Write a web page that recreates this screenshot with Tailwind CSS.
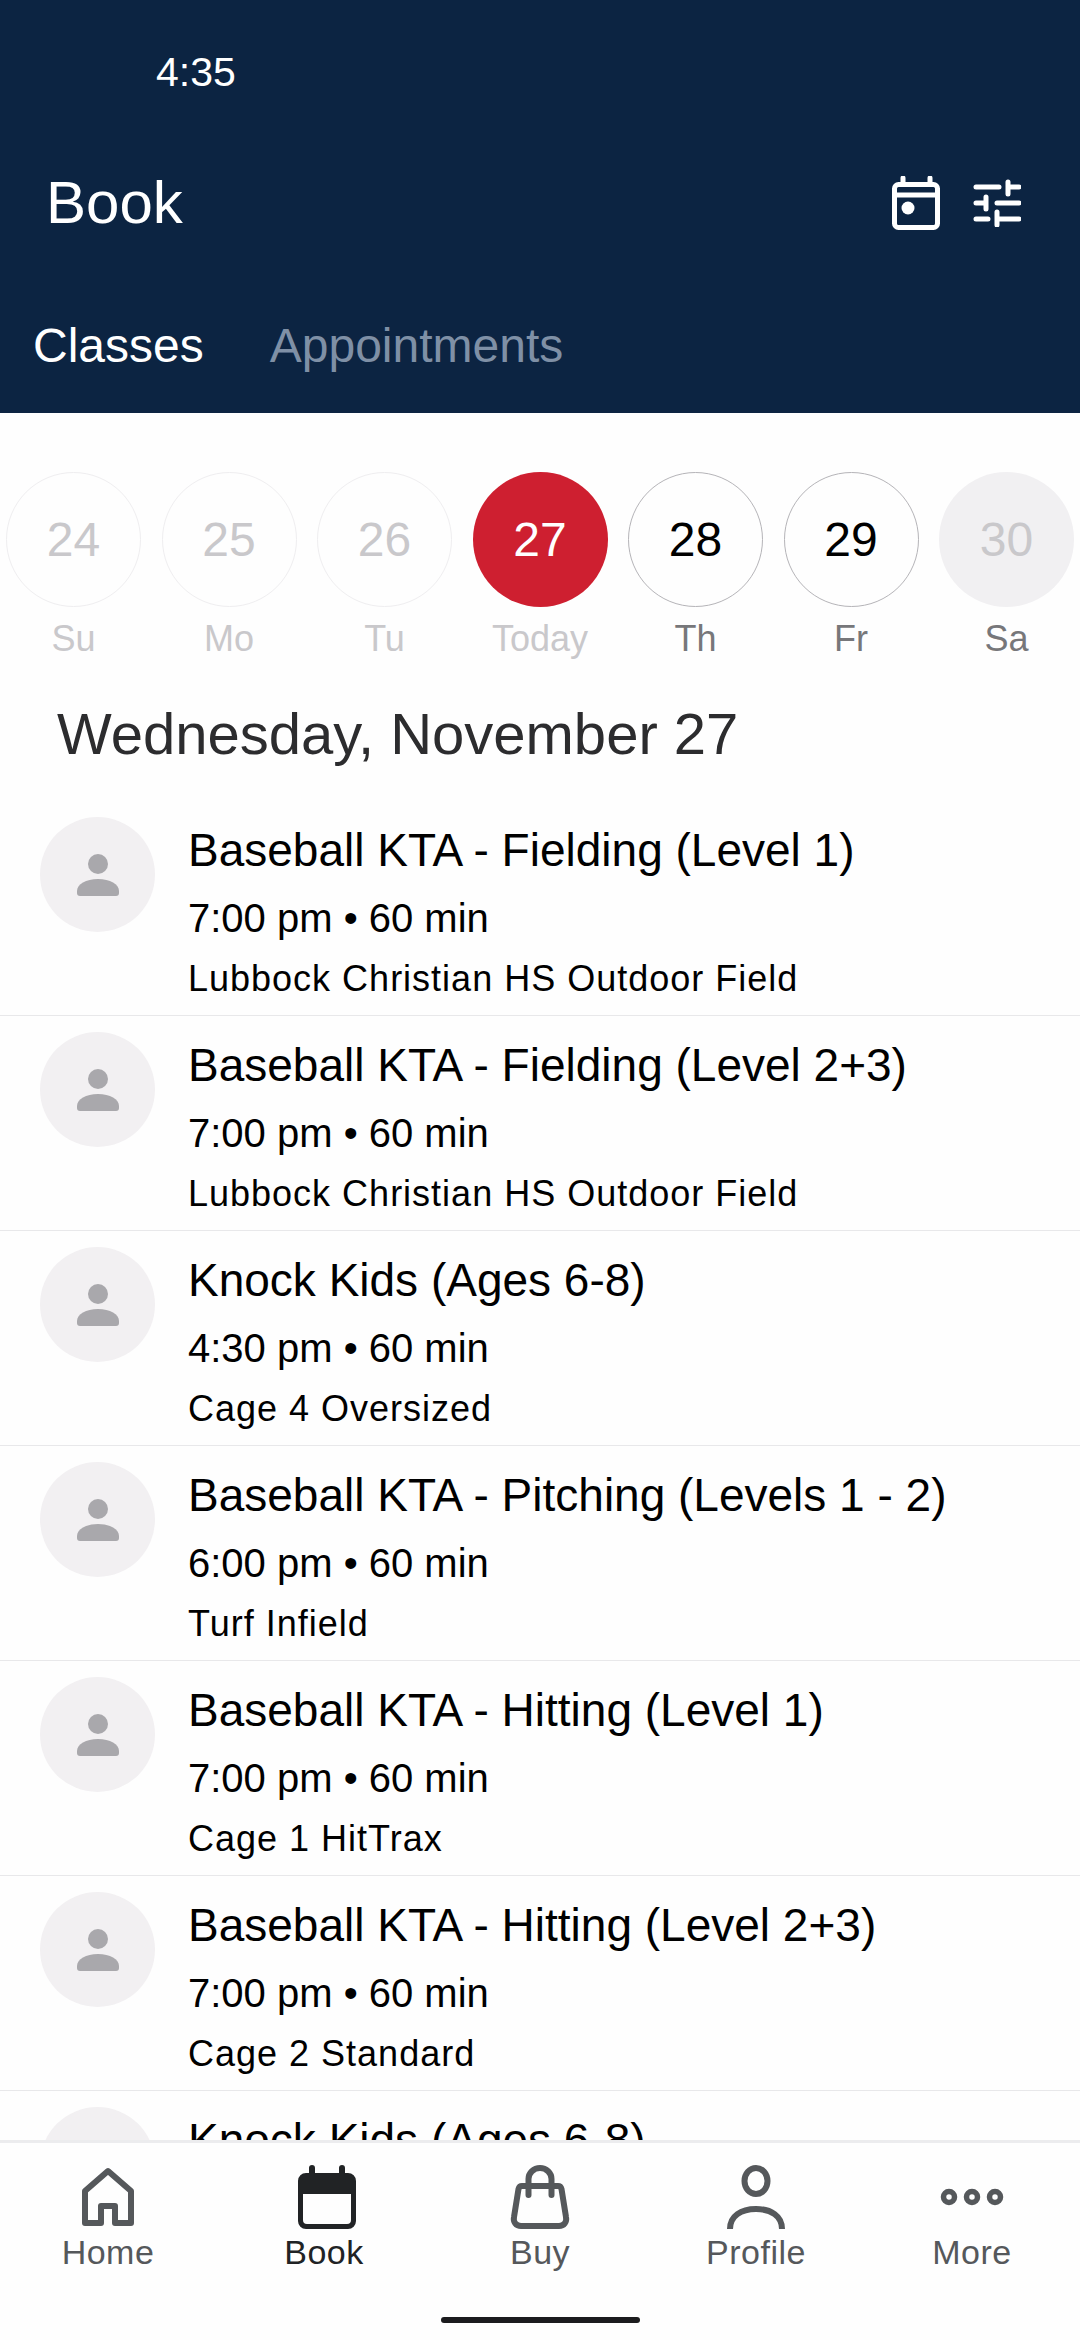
<!doctype html>
<html lang="en">
<head>
<meta charset="UTF-8" />
<meta name="viewport" content="width=device-width, initial-scale=1.0" />
<title>Book</title>
<script src="https://cdn.jsdelivr.net/npm/@tailwindcss/browser@4"></script>
</head>
<body class="font-['Liberation_Sans',sans-serif]">
<div class="w-[1080px] h-[2340px] flex flex-col overflow-hidden bg-[#fefefe]">

  <!-- header -->
  <header class="h-[413px] shrink-0 bg-[#0c2442] text-white">
    <div class="h-[144px] flex items-center pl-[156px] pt-[2px] text-[41px]">4:35</div>
    <div class="h-[118px] flex items-center justify-between pl-[46px] pr-[59px]">
      <h1 class="text-[60px]">Book</h1>
      <div class="flex items-center gap-[33px]">
        <svg width="48" height="54" viewBox="0 0 48 54" fill="none" stroke="white" stroke-width="5" stroke-linecap="round">
          <rect x="2.5" y="8.5" width="43" height="43" rx="4" />
          <path d="M11 2V8M38 2V8M3 19H45" />
          <circle cx="16" cy="32" r="6.5" fill="white" stroke="none" />
        </svg>
        <svg width="48" height="48" viewBox="0 0 48 48" fill="none" stroke="white" stroke-width="5" stroke-linecap="round">
          <path d="M3 8H26M35 3V15M35 8H46M3 24H13M13 18V30M24 24H46M3 40H15M24 33V46M24 40H46" />
        </svg>
      </div>
    </div>
    <div class="h-[151px] flex items-center gap-[66px] pl-[33px] pt-[16px] text-[48px]">
      <span>Classes</span>
      <span class="text-[#7f90a6]">Appointments</span>
    </div>
  </header>

  <!-- date strip -->
  <div class="flex gap-[20.5px] pl-[6px] pt-[59px] shrink-0">
    <div class="w-[135px] flex flex-col items-center">
      <div class="size-[135px] rounded-full border border-[#efeef0] flex items-center justify-center text-[48px] text-[#c9c8cb]">24</div>
      <span class="mt-[10px] text-[36px] leading-[44px] text-[#c9c8cb]">Su</span>
    </div>
    <div class="w-[135px] flex flex-col items-center">
      <div class="size-[135px] rounded-full border border-[#efeef0] flex items-center justify-center text-[48px] text-[#c9c8cb]">25</div>
      <span class="mt-[10px] text-[36px] leading-[44px] text-[#c9c8cb]">Mo</span>
    </div>
    <div class="w-[135px] flex flex-col items-center">
      <div class="size-[135px] rounded-full border border-[#efeef0] flex items-center justify-center text-[48px] text-[#c9c8cb]">26</div>
      <span class="mt-[10px] text-[36px] leading-[44px] text-[#c9c8cb]">Tu</span>
    </div>
    <div class="w-[135px] flex flex-col items-center">
      <div class="size-[135px] rounded-full bg-[#ce1f30] flex items-center justify-center text-[48px] text-white">27</div>
      <span class="mt-[10px] text-[36px] leading-[44px] text-[#c9c8cb]">Today</span>
    </div>
    <div class="w-[135px] flex flex-col items-center">
      <div class="size-[135px] rounded-full border border-[#b5b4b8] flex items-center justify-center text-[48px] text-black">28</div>
      <span class="mt-[10px] text-[36px] leading-[44px] text-[#77777a]">Th</span>
    </div>
    <div class="w-[135px] flex flex-col items-center">
      <div class="size-[135px] rounded-full border border-[#b5b4b8] flex items-center justify-center text-[48px] text-black">29</div>
      <span class="mt-[10px] text-[36px] leading-[44px] text-[#77777a]">Fr</span>
    </div>
    <div class="w-[135px] flex flex-col items-center">
      <div class="size-[135px] rounded-full bg-[#f1f0f2] flex items-center justify-center text-[48px] text-[#c9c8cb]">30</div>
      <span class="mt-[10px] text-[36px] leading-[44px] text-[#77777a]">Sa</span>
    </div>
  </div>

  <h2 class="shrink-0 h-[140px] flex items-center pl-[57px] pt-[4px] text-[58px] text-[#2c2c2e]">Wednesday, November 27</h2>

  <!-- class list -->
  <ul class="flex-1 min-h-0 overflow-hidden text-black">
    <li class="h-[215px] border-b border-[#e8e8ea] flex pl-[40px] gap-[33px]">
      <div class="mt-[16px] size-[115px] shrink-0 rounded-full bg-[#f2f0f2] flex items-center justify-center">
        <svg width="42" height="42" viewBox="0 0 42 42" fill="#a9a8ac"><circle cx="21" cy="10" r="10" /><path d="M0 37C0 30 9 25 21 25S42 30 42 37V39A3 3 0 0 1 39 42H3A3 3 0 0 1 0 39Z" /></svg>
      </div>
      <div class="pt-[21px]">
        <p class="text-[46px] leading-[56px]">Baseball KTA - Fielding (Level 1)</p>
        <p class="mt-[16px] text-[40px] leading-[48px]">7:00 pm • 60 min</p>
        <p class="mt-[15px] text-[36px] leading-[44px] tracking-[1px]">Lubbock Christian HS Outdoor Field</p>
      </div>
    </li>
    <li class="h-[215px] border-b border-[#e8e8ea] flex pl-[40px] gap-[33px]">
      <div class="mt-[16px] size-[115px] shrink-0 rounded-full bg-[#f2f0f2] flex items-center justify-center">
        <svg width="42" height="42" viewBox="0 0 42 42" fill="#a9a8ac"><circle cx="21" cy="10" r="10" /><path d="M0 37C0 30 9 25 21 25S42 30 42 37V39A3 3 0 0 1 39 42H3A3 3 0 0 1 0 39Z" /></svg>
      </div>
      <div class="pt-[21px]">
        <p class="text-[46px] leading-[56px]">Baseball KTA - Fielding (Level 2+3)</p>
        <p class="mt-[16px] text-[40px] leading-[48px]">7:00 pm • 60 min</p>
        <p class="mt-[15px] text-[36px] leading-[44px] tracking-[1px]">Lubbock Christian HS Outdoor Field</p>
      </div>
    </li>
    <li class="h-[215px] border-b border-[#e8e8ea] flex pl-[40px] gap-[33px]">
      <div class="mt-[16px] size-[115px] shrink-0 rounded-full bg-[#f2f0f2] flex items-center justify-center">
        <svg width="42" height="42" viewBox="0 0 42 42" fill="#a9a8ac"><circle cx="21" cy="10" r="10" /><path d="M0 37C0 30 9 25 21 25S42 30 42 37V39A3 3 0 0 1 39 42H3A3 3 0 0 1 0 39Z" /></svg>
      </div>
      <div class="pt-[21px]">
        <p class="text-[46px] leading-[56px]">Knock Kids (Ages 6-8)</p>
        <p class="mt-[16px] text-[40px] leading-[48px]">4:30 pm • 60 min</p>
        <p class="mt-[15px] text-[36px] leading-[44px] tracking-[1px]">Cage 4 Oversized</p>
      </div>
    </li>
    <li class="h-[215px] border-b border-[#e8e8ea] flex pl-[40px] gap-[33px]">
      <div class="mt-[16px] size-[115px] shrink-0 rounded-full bg-[#f2f0f2] flex items-center justify-center">
        <svg width="42" height="42" viewBox="0 0 42 42" fill="#a9a8ac"><circle cx="21" cy="10" r="10" /><path d="M0 37C0 30 9 25 21 25S42 30 42 37V39A3 3 0 0 1 39 42H3A3 3 0 0 1 0 39Z" /></svg>
      </div>
      <div class="pt-[21px]">
        <p class="text-[46px] leading-[56px]">Baseball KTA - Pitching (Levels 1 - 2)</p>
        <p class="mt-[16px] text-[40px] leading-[48px]">6:00 pm • 60 min</p>
        <p class="mt-[15px] text-[36px] leading-[44px] tracking-[1px]">Turf Infield</p>
      </div>
    </li>
    <li class="h-[215px] border-b border-[#e8e8ea] flex pl-[40px] gap-[33px]">
      <div class="mt-[16px] size-[115px] shrink-0 rounded-full bg-[#f2f0f2] flex items-center justify-center">
        <svg width="42" height="42" viewBox="0 0 42 42" fill="#a9a8ac"><circle cx="21" cy="10" r="10" /><path d="M0 37C0 30 9 25 21 25S42 30 42 37V39A3 3 0 0 1 39 42H3A3 3 0 0 1 0 39Z" /></svg>
      </div>
      <div class="pt-[21px]">
        <p class="text-[46px] leading-[56px]">Baseball KTA - Hitting (Level 1)</p>
        <p class="mt-[16px] text-[40px] leading-[48px]">7:00 pm • 60 min</p>
        <p class="mt-[15px] text-[36px] leading-[44px] tracking-[1px]">Cage 1 HitTrax</p>
      </div>
    </li>
    <li class="h-[215px] border-b border-[#e8e8ea] flex pl-[40px] gap-[33px]">
      <div class="mt-[16px] size-[115px] shrink-0 rounded-full bg-[#f2f0f2] flex items-center justify-center">
        <svg width="42" height="42" viewBox="0 0 42 42" fill="#a9a8ac"><circle cx="21" cy="10" r="10" /><path d="M0 37C0 30 9 25 21 25S42 30 42 37V39A3 3 0 0 1 39 42H3A3 3 0 0 1 0 39Z" /></svg>
      </div>
      <div class="pt-[21px]">
        <p class="text-[46px] leading-[56px]">Baseball KTA - Hitting (Level 2+3)</p>
        <p class="mt-[16px] text-[40px] leading-[48px]">7:00 pm • 60 min</p>
        <p class="mt-[15px] text-[36px] leading-[44px] tracking-[1px]">Cage 2 Standard</p>
      </div>
    </li>
    <li class="h-[215px] flex pl-[40px] gap-[33px]">
      <div class="mt-[16px] size-[115px] shrink-0 rounded-full bg-[#f2f0f2] flex items-center justify-center">
        <svg width="42" height="42" viewBox="0 0 42 42" fill="#a9a8ac"><circle cx="21" cy="10" r="10" /><path d="M0 37C0 30 9 25 21 25S42 30 42 37V39A3 3 0 0 1 39 42H3A3 3 0 0 1 0 39Z" /></svg>
      </div>
      <div class="pt-[21px]">
        <p class="text-[46px] leading-[56px]">Knock Kids (Ages 6-8)</p>
      </div>
    </li>
  </ul>

  <!-- bottom nav -->
  <nav class="h-[200px] shrink-0 border-t-[3px] border-[#ececee] bg-[#fefefe] flex flex-col">
    <div class="grid grid-cols-5 pt-[22px]">
      <a href="#" class="flex flex-col items-center text-[#55585b]">
        <svg width="64" height="64" viewBox="0 0 64 64" fill="none" stroke="#55585b" stroke-width="6" stroke-linejoin="round">
          <path d="M9 58V26L32 6L55 26V58H39V41H25V58Z" />
        </svg>
        <span class="mt-[3px] text-[34px] leading-[40px] tracking-[0.5px]">Home</span>
      </a>
      <a href="#" class="flex flex-col items-center text-[#212325]">
        <svg width="64" height="64" viewBox="0 0 64 64" class="overflow-visible">
          <path d="M20 3V10M50 3V10" stroke="#212325" stroke-width="6" stroke-linecap="round" />
          <path fill-rule="evenodd" fill="#212325" d="M14 8H56A8 8 0 0 1 64 16V56A8 8 0 0 1 56 64H14A8 8 0 0 1 6 56V16A8 8 0 0 1 14 8ZM11 29V55A4 4 0 0 0 15 59H55A4 4 0 0 0 59 55V29Z" />
        </svg>
        <span class="mt-[3px] text-[34px] leading-[40px] tracking-[0.5px]">Book</span>
      </a>
      <a href="#" class="flex flex-col items-center text-[#55585b]">
        <svg width="64" height="64" viewBox="0 0 64 64" fill="none" stroke="#55585b" stroke-width="6" stroke-linecap="round" stroke-linejoin="round">
          <path d="M14 21H50C52 21 53 22 53.500 24L58 52C59 57 56 61 51 61H13C8 61 5 57 6 52L10.500 24C11 22 12 21 14 21Z" />
          <path d="M20.500 30V14A11.500 11 0 0 1 43.500 14V30" />
        </svg>
        <span class="mt-[3px] text-[34px] leading-[40px] tracking-[0.5px]">Buy</span>
      </a>
      <a href="#" class="flex flex-col items-center text-[#55585b]">
        <svg width="64" height="64" viewBox="0 0 64 64" fill="none" stroke="#55585b" stroke-width="6">
          <ellipse cx="32" cy="16" rx="11.500" ry="13" />
          <path d="M6 64C6 51 17 44 32 44S58 51 58 64" />
        </svg>
        <span class="mt-[3px] text-[34px] leading-[40px] tracking-[0.5px]">Profile</span>
      </a>
      <a href="#" class="flex flex-col items-center text-[#55585b]">
        <svg width="64" height="64" viewBox="0 0 64 64" fill="none" stroke="#55585b" stroke-width="5.500">
          <circle cx="9" cy="32" r="5.500" /><circle cx="32" cy="32" r="5.500" /><circle cx="55" cy="32" r="5.500" />
        </svg>
        <span class="mt-[3px] text-[34px] leading-[40px] tracking-[0.5px]">More</span>
      </a>
    </div>
    <div class="mt-[45px] mx-auto w-[199px] h-[6px] rounded-full bg-[#1c1c1e]"></div>
  </nav>
</div>
</body>
</html>
